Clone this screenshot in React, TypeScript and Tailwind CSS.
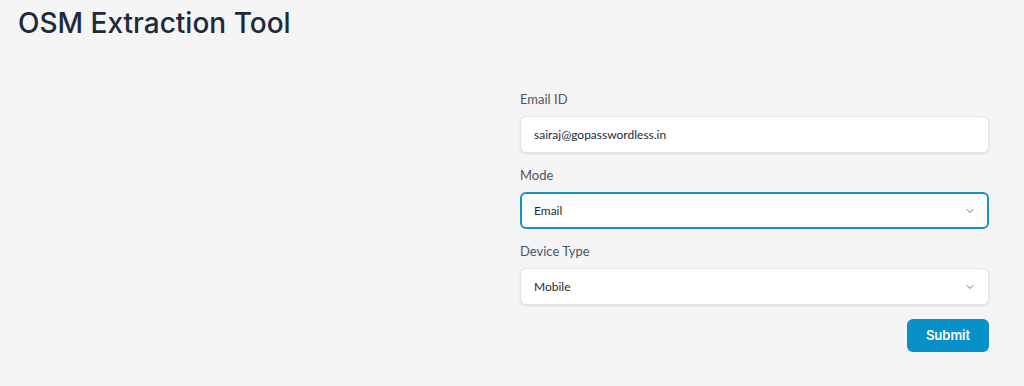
import { ChevronDown } from 'lucide-react';

const font = { fontFamily: 'Inter, "Noto Sans", sans-serif' };
const formFont = { fontFamily: 'Lato, "Noto Sans", sans-serif' };

function Field({ label, children }: { label: string; children: React.ReactNode }) {
    return (
        <div className="flex flex-col">
            <label className="text-[13px] leading-4 text-[#4b5563] mb-[9px]" style={formFont}>{label}</label>
            {children}
        </div>
    );
}

function SelectBox({ value, focused = false }: { value: string; focused?: boolean }) {
    return (
        <div
            className={`h-[37px] flex items-center justify-between bg-white rounded-[6px] text-[12px] text-[#1f2937] ${
                focused
                    ? 'border-2 border-[#1592c8] pl-[12px] pr-[11px]'
                    : 'border border-[#e2e4e8] pl-[13px] pr-[12px] shadow-[0_1px_2px_rgba(0,0,0,0.12)]'
            }`}
            style={formFont}
        >
            <span>{value}</span>
            <ChevronDown className="w-[12px] h-[12px] text-[#6b7280]" strokeWidth={2} />
        </div>
    );
}

export default function App() {
    return (
        <div className="w-[1024px] h-[386px] bg-[#f5f5f5] overflow-hidden" style={font}>
            <h1 className="pl-[18px] pt-[5px] text-[28px] leading-[36px] font-medium text-[#1e293b]">OSM Extraction Tool</h1>

            <div className="flex mt-[50px]">
                <div className="flex-1" />
                <form className="w-[469px] mr-[35px] flex flex-col gap-[14px]">
                    <Field label="Email ID">
                        <div
                            className="h-[37px] flex items-center pl-[13px] bg-white rounded-[6px] border border-[#e2e4e8] shadow-[0_1px_2px_rgba(0,0,0,0.12)] text-[12px] text-[#1f2937]"
                            style={formFont}
                        >
                            sairaj@gopasswordless.in
                        </div>
                    </Field>
                    <Field label="Mode">
                        <SelectBox value="Email" focused />
                    </Field>
                    <Field label="Device Type">
                        <SelectBox value="Mobile" />
                    </Field>
                    <div className="flex justify-end">
                        <button
                            type="button"
                            className="w-[82px] h-[33px] rounded-[6px] bg-[#0891c9] text-white text-[13px] font-semibold"
                        >
                            Submit
                        </button>
                    </div>
                </form>
            </div>
        </div>
    );
}
